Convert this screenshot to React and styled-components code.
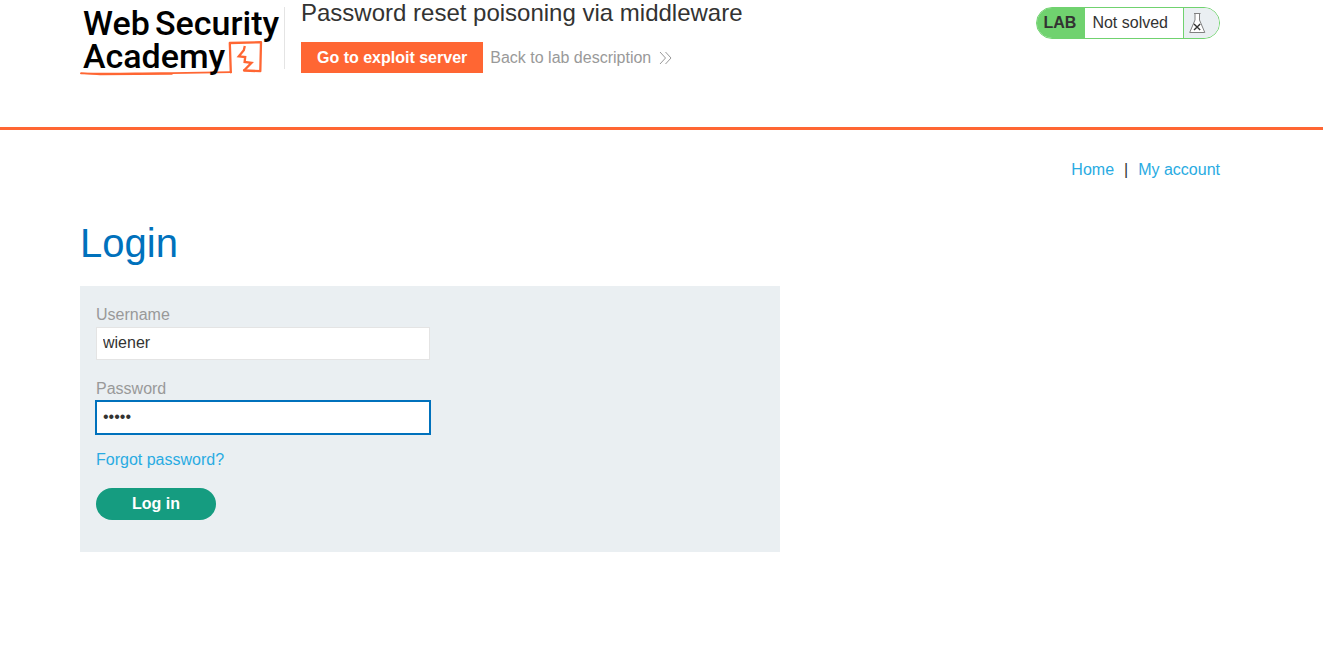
import React, { useState } from 'react';
import styled, { createGlobalStyle } from 'styled-components';

const GlobalStyle = createGlobalStyle`
  * { box-sizing: border-box; }
  body {
    margin: 0;
    background: #fff;
    color: #333332;
    font: 16px/24px "Liberation Sans", Arial, sans-serif;
  }
`;

const Container = styled.div`
  max-width: 1323px;
  padding: 0 103px 0 80px;
`;

const Header = styled.header`
  border-bottom: 3px solid #ff6633;
`;

const HeaderRow = styled(Container)`
  display: flex;
  align-items: flex-start;
  min-height: 127px;
`;

const LogoLink = styled.a`
  display: block;
  flex: none;
  width: 204px;
  height: 80px;
  svg { display: block; }
`;

const Heading = styled.div`
  flex: 1;
  display: flex;
  align-items: flex-start;
`;

const Divider = styled.div`
  width: 1px;
  height: 62px;
  margin: 7px 16px 0 0;
  background: #e4e4e4;
`;

const LabTitle = styled.h2`
  margin: 0 0 16px;
  font-size: 24px;
  font-weight: 400;
  line-height: 26px;
`;

const LabActions = styled.div`
  display: flex;
  align-items: center;
  gap: 7px;
`;

const ServerLink = styled.a`
  padding: 4px 16px 3px;
  background: #ff6633;
  color: #fff;
  font-weight: 700;
  text-decoration: none;
`;

const BackLink = styled.a`
  display: flex;
  align-items: center;
  gap: 8px;
  color: #999;
  text-decoration: none;
`;

const Status = styled.div`
  display: flex;
  height: 32px;
  margin-top: 7px;
  overflow: hidden;
  border: 1px solid #70d26f;
  border-radius: 16px;
  line-height: 30px;
`;

const StatusTag = styled.span`
  padding: 0 9px 0 7px;
  background: #70d26f;
  font-weight: 700;
`;

const StatusText = styled.span`
  padding: 0 15px 0 7px;
  border-right: 1px solid #70d26f;
`;

const StatusIcon = styled.span`
  width: 35px;
  padding: 4px 0 0 5px;
  background: #eaeff2;
  line-height: 0;
`;

const Nav = styled.nav`
  display: flex;
  justify-content: flex-end;
  gap: 10px;
  padding-top: 28px;
`;

const TextLink = styled.a`
  color: #29abe2;
  text-decoration: none;
`;

const PageTitle = styled.h1`
  margin: 37px 0 19px;
  color: #0071bc;
  font-size: 40px;
  font-weight: 400;
  line-height: 48px;
`;

const LoginForm = styled.form`
  display: flex;
  flex-direction: column;
  align-items: flex-start;
  gap: 16px;
  max-width: 700px;
  padding: 17px 16px 32px;
  background: #eaeff2;
`;

const Fields = styled.div`
  display: grid;
  gap: 17px;
  width: 50%;
  margin-bottom: -2px;
`;

const FieldLabel = styled.label`
  display: block;
  color: #999;
`;

const TextInput = styled.input`
  display: block;
  width: 100%;
  height: 33px;
  padding: 0 6px 2px;
  border: 1px solid ${(p) => (p.$active ? '#0071bc' : '#e4e4e4')};
  border-radius: 0;
  outline: none;
  box-shadow: ${(p) => (p.$active ? '0 0 0 1px #0071bc' : 'none')};
  background: #fff;
  color: #333332;
  font: inherit;
`;

const SubmitButton = styled.button`
  width: 120px;
  height: 32px;
  padding: 0;
  border: 0;
  border-radius: 16px;
  background: #159c80;
  color: #fff;
  font: inherit;
  font-weight: 700;
`;

const LogoText = styled.text`
  font-family: Roboto, "Liberation Sans", sans-serif;
  font-size: 34px;
  font-weight: 500;
  fill: #000;
`;

function Logo() {
  return (
    <svg width="204" height="80" viewBox="0 0 204 80" role="img" aria-label="Web Security Academy">
      <g fill="none" stroke="#ff6633" strokeLinejoin="round" strokeLinecap="round">
        <path d="M1 73.2 L20 74.6 L92 74.2" strokeWidth="1.2" />
        <path d="M1 73.3 C40 74.3 62 72.7 92 73.2 L151 72.2" strokeWidth="1.8" />
        <path d="M150.8 72.3 L149.8 43 L181 42.2 L180.3 71.2 L164 70.5" strokeWidth="2.3" />
      </g>
      <path
        d="M164.8 46 L163.8 50.2 L158.8 56.4 L165.2 57 L164.6 62 L171.5 62.8 L164 70.5"
        fill="none"
        stroke="#ff6633"
        strokeWidth="2.3"
      />
      <LogoText x="3" y="35">Web</LogoText>
      <LogoText x="75" y="35">Security</LogoText>
      <LogoText x="3" y="68">Academy</LogoText>
    </svg>
  );
}

function DoubleChevron() {
  return (
    <svg width="13" height="14" viewBox="0 0 13 14" fill="none" stroke="#999" aria-hidden="true">
      <path d="M1 1 L6.5 7 L1 13 M6.5 1 L12 7 L6.5 13" />
    </svg>
  );
}

function Flask() {
  return (
    <svg width="17" height="22" viewBox="0 0 17 22" fill="none" aria-hidden="true">
      <path d="M6 1.5 V8 L.7 20.5 H15.8 L10.5 8 V1.5" fill="#fff" stroke="#808080" />
      <path d="M5 1.5 H11.5" stroke="#808080" />
      <path d="M5 12 L11.2 18 M11.2 12 L5 18" stroke="#333332" strokeWidth="1.4" />
    </svg>
  );
}

export default function App() {
  const [username, setUsername] = useState('wiener');
  const [password, setPassword] = useState('peter');

  return (
    <>
      <GlobalStyle />
      <Header>
        <HeaderRow>
          <LogoLink href="#"><Logo /></LogoLink>
          <Heading>
            <Divider />
            <div>
              <LabTitle>Password reset poisoning via middleware</LabTitle>
              <LabActions>
                <ServerLink href="#exploit">Go to exploit server</ServerLink>
                <BackLink href="#description">Back to lab description <DoubleChevron /></BackLink>
              </LabActions>
            </div>
          </Heading>
          <Status>
            <StatusTag>LAB</StatusTag>
            <StatusText>Not solved</StatusText>
            <StatusIcon><Flask /></StatusIcon>
          </Status>
        </HeaderRow>
      </Header>
      <Container as="main">
        <Nav>
          <TextLink href="#home">Home</TextLink>
          <span>|</span>
          <TextLink href="#account">My account</TextLink>
        </Nav>
        <PageTitle>Login</PageTitle>
        <LoginForm onSubmit={(e) => e.preventDefault()}>
          <Fields>
            <div>
              <FieldLabel htmlFor="username">Username</FieldLabel>
              <TextInput id="username" value={username} onChange={(e) => setUsername(e.target.value)} />
            </div>
            <div>
              <FieldLabel htmlFor="password">Password</FieldLabel>
              <TextInput
                id="password"
                type="password"
                $active
                value={password}
                onChange={(e) => setPassword(e.target.value)}
              />
            </div>
          </Fields>
          <TextLink href="#forgot">Forgot password?</TextLink>
          <SubmitButton type="submit">Log in</SubmitButton>
        </LoginForm>
      </Container>
    </>
  );
}
